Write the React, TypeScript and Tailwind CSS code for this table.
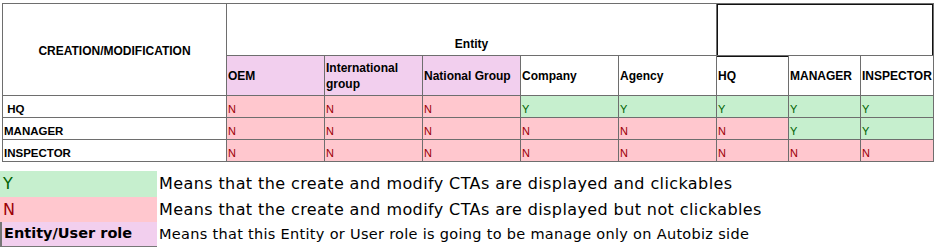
const cols = "223px 97px 97px 97px 97px 97px 71px 71px 72px";

type Val = "Y" | "N";

const rows: { label: string; values: Val[] }[] = [
    { label: " HQ", values: ["N", "N", "N", "Y", "Y", "Y", "Y", "Y"] },
    { label: "MANAGER", values: ["N", "N", "N", "N", "N", "N", "Y", "Y"] },
    { label: "INSPECTOR", values: ["N", "N", "N", "N", "N", "N", "N", "N"] },
];

const headers = [
    { text: "OEM", purple: true },
    { text: "International group", purple: true },
    { text: "National Group", purple: true },
    { text: "Company", purple: false },
    { text: "Agency", purple: false },
    { text: "HQ", purple: false },
    { text: "MANAGER", purple: false },
    { text: "INSPECTOR", purple: false },
];

function ValueCell({ v }: { v: Val }) {
    return (
        <div
            className={`flex items-end pl-px text-[11px] leading-[15px] ${
                v === "Y" ? "bg-[#c6efce] text-[#006100]" : "bg-[#ffc7ce] text-[#9c0006]"
            }`}
        >
            {v}
        </div>
    );
}

export default function App() {
    return (
        <div className="h-[252px] w-[938px] bg-white font-['Liberation_Sans',Arial,sans-serif] text-black">
            <div className="pl-[2px] pt-[3px]">
                <div
                    className="grid w-fit gap-px bg-[#6e6e6e] p-px"
                    style={{ gridTemplateColumns: cols, gridTemplateRows: "51px 39px 21px 21px 21px" }}
                >
                    <div className="row-span-2 flex items-center justify-center bg-white pt-[2px] text-[12px] font-bold">
                        CREATION/MODIFICATION
                    </div>
                    <div className="col-span-5 flex items-end justify-center bg-white pb-[2px] text-[12px] font-bold">
                        Entity
                    </div>
                    <div className="col-span-3 bg-white shadow-[inset_1px_1px_0_#111,inset_-1px_0_0_#111]" />

                    {headers.map((h) => (
                        <div
                            key={h.text}
                            className={`flex items-center pl-px text-[12px] font-bold leading-[16px] ${
                                h.purple ? "bg-[#f2cfee]" : "bg-white"
                            } ${h.text === "HQ" ? "shadow-[inset_0_1px_0_#111]" : ""}`}
                        >
                            {h.text}
                        </div>
                    ))}

                    {rows.map((r) => (
                        <div key={r.label} className="contents">
                            <div className="flex items-end whitespace-pre bg-white pl-px text-[11.5px] font-bold leading-[15px]">
                                {r.label}
                            </div>
                            {r.values.map((v, i) => (
                                <ValueCell key={i} v={v} />
                            ))}
                        </div>
                    ))}
                </div>
            </div>

            <div className="mt-[9px] flex flex-col font-['DejaVu_Sans',sans-serif]">
                <div className="flex h-[26px] items-center">
                    <div className="flex h-full w-[157px] items-center bg-[#c6efce] pl-[3px] text-[16px] text-[#006100]">Y</div>
                    <span className="pl-[2px] text-[16px] tracking-[0.4px]">Means that the create and modify CTAs are displayed and clickables</span>
                </div>
                <div className="flex h-[25px] items-center">
                    <div className="flex h-full w-[157px] items-center bg-[#ffc7ce] pl-[3px] text-[16px] text-[#9c0006]">N</div>
                    <span className="pl-[2px] text-[16px] tracking-[0.4px]">Means that the create and modify CTAs are displayed but not clickables</span>
                </div>
                <div className="flex h-[25px] items-center">
                    <div className="flex h-full w-[157px] items-center border-l-2 border-b border-[#777] bg-[#f2cfee] pl-[2px] text-[14.5px] font-bold">
                        Entity/User role
                    </div>
                    <span className="pl-[2px] text-[14.5px] tracking-[0.3px]">Means that this Entity or User role is going to be manage only on Autobiz side</span>
                </div>
            </div>
        </div>
    );
}
